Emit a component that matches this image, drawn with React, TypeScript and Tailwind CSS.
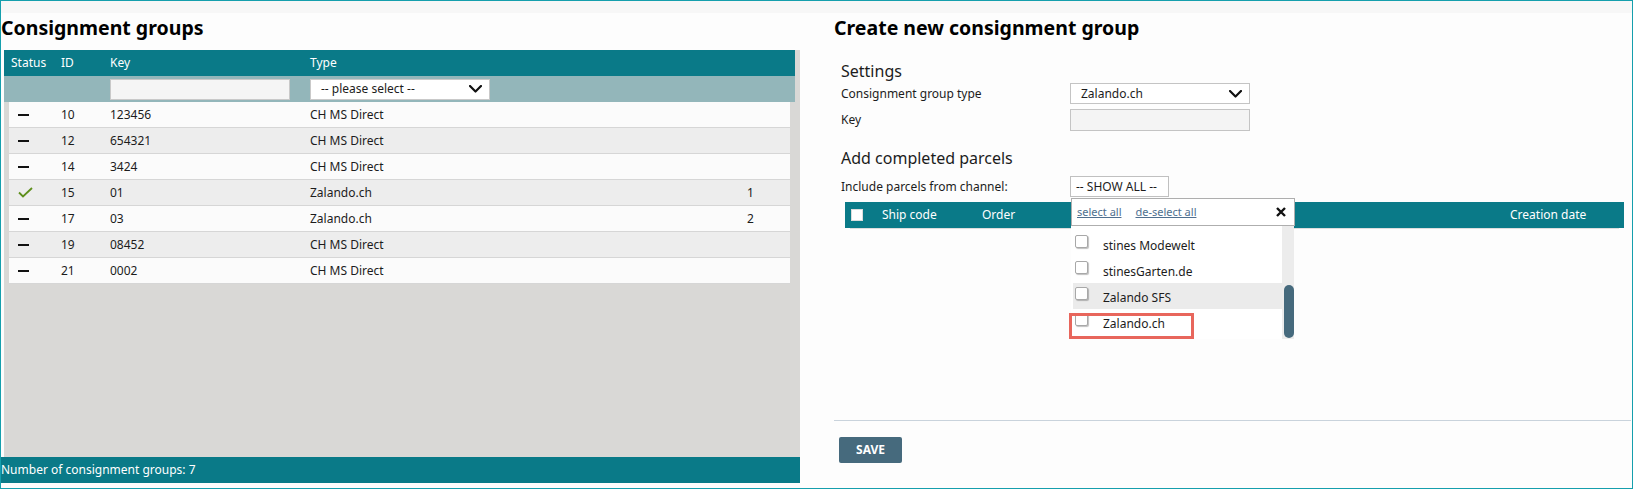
import React from "react";

const TEAL = "bg-[#0a7a88]";

function Chevron() {
  return (
    <svg width="13" height="8" viewBox="0 0 13 8">
      <polyline points="1,1 6.5,6.5 12,1" fill="none" stroke="#111" strokeWidth="2.2" strokeLinecap="round" strokeLinejoin="round" />
    </svg>
  );
}

function Dash() {
  return <div className="w-[11px] h-[2px] bg-[#111]" />;
}

function Check() {
  return (
    <svg width="15" height="11" viewBox="0 0 15 11">
      <polyline points="1,5.5 5,9.5 14,1" fill="none" stroke="#5e8f1c" strokeWidth="1.8" />
    </svg>
  );
}

type Row = { id: number; key: string; type: string; count?: number; ok?: boolean };

const rows: Row[] = [
  { id: 10, key: "123456", type: "CH MS Direct" },
  { id: 12, key: "654321", type: "CH MS Direct" },
  { id: 14, key: "3424", type: "CH MS Direct" },
  { id: 15, key: "01", type: "Zalando.ch", count: 1, ok: true },
  { id: 17, key: "03", type: "Zalando.ch", count: 2 },
  { id: 19, key: "08452", type: "CH MS Direct" },
  { id: 21, key: "0002", type: "CH MS Direct" },
];

function Box() {
  return (
    <div className="mb-[5px] w-[13px] h-[13px] shrink-0 rounded-[2px] border border-[#a8a8a8] bg-white shadow-[1px_1px_1px_rgba(0,0,0,0.25)]" />
  );
}

const items = [
  { label: "", hl: false },
  { label: "stines Modewelt", hl: false },
  { label: "stinesGarten.de", hl: false },
  { label: "Zalando SFS", hl: true },
  { label: "Zalando.ch", hl: false },
];

export default function App() {
  return (
    <div className="w-[1633px] h-[489px] border border-[#159fad] bg-[#fdfdfd] flex flex-col overflow-hidden font-['Noto_Sans',sans-serif] text-[#1c1c1c]">
      <div className="h-[12px] shrink-0 bg-[#f7f7f7]" />
      <div className="flex">
        {/* Left column */}
        <div className="w-[799px] shrink-0 flex flex-col">
          <h1 className="mt-[2px] h-[26px] leading-[26px] text-[19.5px] font-bold text-black whitespace-nowrap">
            Consignment groups
          </h1>
          <div className="mt-[9px] ml-[3px] w-[796px] h-[407px] bg-[#d9d8d6] flex flex-col">
            <div className={`w-[791px] h-[26px] ${TEAL} flex items-center pl-[7px] text-[12px] text-white`}>
              <div className="w-[50px]">Status</div>
              <div className="w-[49px]">ID</div>
              <div className="w-[200px]">Key</div>
              <div>Type</div>
            </div>
            <div className="w-[791px] h-[26px] bg-[#93b6ba] flex items-center">
              <div className="w-[106px]" />
              <div className="w-[180px] h-[21px] bg-[#f5f5f5] border border-[#c9c9c9]" />
              <div className="w-[20px]" />
              <div className="w-[180px] h-[21px] bg-white border border-[#c9c9c9] flex items-center justify-between pl-[10px] pr-[7px] text-[12px]">
                <span>-- please select --</span>
                <Chevron />
              </div>
            </div>
            <div className="ml-[5px] w-[781px] flex flex-col">
              {rows.map((r, i) => (
                <div
                  key={r.id}
                  className={`h-[26px] flex items-center text-[12px] border-b border-[#d6d6d6] ${i % 2 === 1 ? "bg-[#ededed]" : "bg-[#fbfbfb]"}`}
                >
                  <div className="w-[52px] pl-[9px] flex items-center">{r.ok ? <Check /> : <Dash />}</div>
                  <div className="w-[49px]">{r.id}</div>
                  <div className="w-[200px]">{r.key}</div>
                  <div className="w-[437px]">{r.type}</div>
                  <div>{r.count ?? ""}</div>
                </div>
              ))}
            </div>
          </div>
          <div className={`h-[26px] ${TEAL} flex items-center text-[12px] text-white whitespace-nowrap`}>
            Number of consignment groups: 7
          </div>
        </div>

        {/* Right column */}
        <div className="ml-[34px] w-[797px] flex flex-col">
          <h1 className="mt-[2px] h-[26px] leading-[26px] text-[19.5px] font-bold text-black whitespace-nowrap">
            Create new consignment group
          </h1>
          <div className="pl-[7px] text-[12px]">
            <div className="mt-[19px] h-[22px] leading-[22px] text-[16px]">Settings</div>
            <div className="mt-[1px] h-[21px] flex items-center">
              <div className="w-[229px]">Consignment group type</div>
              <div className="w-[180px] h-[21px] bg-white border border-[#c4c4c4] flex items-center justify-between pl-[10px] pr-[7px]">
                <span>Zalando.ch</span>
                <Chevron />
              </div>
            </div>
            <div className="mt-[5px] h-[22px] flex items-center">
              <div className="w-[229px]">Key</div>
              <div className="w-[180px] h-[22px] bg-[#f4f4f4] border border-[#c4c4c4]" />
            </div>
            <div className="mt-[16px] h-[22px] leading-[22px] text-[16px]">Add completed parcels</div>
            <div className="mt-[7px] h-[21px] flex items-center relative z-10">
              <div className="w-[229px]">Include parcels from channel:</div>
              <div className="relative">
                <div className="w-[99px] h-[21px] bg-white border border-[#c0c0c0] flex items-center pl-[5px]">
                  -- SHOW ALL --
                </div>
                <div className="absolute left-[1px] top-[22px] w-[224px]">
                  <div className="relative z-10 h-[28px] bg-white border border-[#aeaeae] flex items-center pl-[5px] pr-[8px] text-[11px]">
                    <span className="underline text-[#4f6f8f]">select all</span>
                    <span className="ml-[14px] underline text-[#4f6f8f]">de-select all</span>
                    <svg className="ml-auto" width="10" height="10" viewBox="0 0 10 10">
                      <path d="M1 1 L9 9 M9 1 L1 9" stroke="#111" strokeWidth="2.4" />
                    </svg>
                  </div>
                  <div className="relative w-[223px] h-[113px] overflow-hidden bg-white">
                    <div className="flex flex-col pl-[2px] pr-[12px]">
                      {items.map((it, i) => (
                        <div
                          key={i}
                          className={`h-[26px] shrink-0 flex items-center ${i === 0 ? "mt-[-21px]" : ""} ${it.hl ? "bg-[#ebebeb]" : ""}`}
                        >
                          <div className="ml-[2px]">
                            <Box />
                          </div>
                          {it.label ? (
                            <span className="ml-[15px] mt-[3px] whitespace-nowrap">{it.label}</span>
                          ) : (
                            <div className="ml-[15px] mt-[14px] w-[48px] h-[2px] border-b-2 border-dotted border-[#222]" />
                          )}
                        </div>
                      ))}
                    </div>
                    <div className="absolute right-0 top-0 bottom-0 w-[12px] bg-[#ececec]" />
                    <div className="absolute right-0 top-[59px] w-[10px] h-[53px] rounded-full bg-[#466a7d]" />
                  </div>
                  <div className="absolute left-[-2px] top-[115px] w-[125px] h-[26px] border-[3px] border-[#e8665c]" />
                </div>
              </div>
            </div>
          </div>
          <div className={`mt-[5px] ml-[11px] mr-[7px] h-[26px] ${TEAL} flex items-center text-[12px] text-white`}>
            <div className="ml-[6px] w-[12px] h-[12px] bg-white border border-[#dcdcdc]" />
            <div className="ml-[19px] w-[100px]">Ship code</div>
            <div>Order</div>
            <div className="ml-auto w-[114px]">Creation date</div>
          </div>
          <div className="ml-[16px] mr-[12px] h-[1px] bg-[#dddddd]" />
          <div className="mt-[191px] h-[1px] bg-[#c9d3dc]" />
          <div className="mt-[16px] ml-[5px] w-[63px] h-[26px] rounded-[2px] bg-[#466a7d] flex items-center justify-center text-[12px] font-bold text-white">
            SAVE
          </div>
        </div>
      </div>
    </div>
  );
}
